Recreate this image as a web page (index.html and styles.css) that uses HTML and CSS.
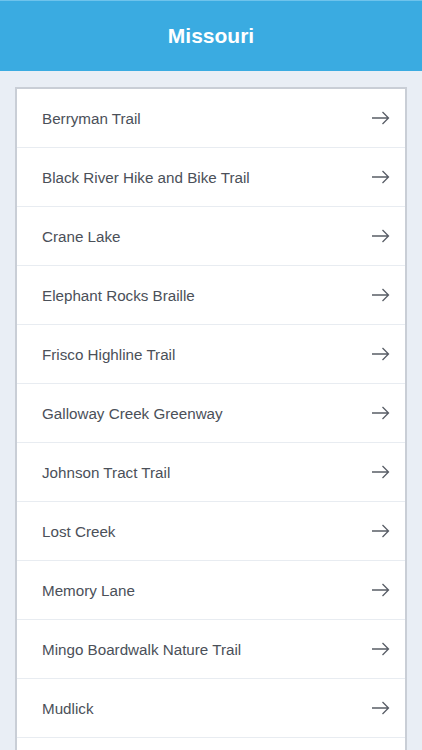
FILE: index.html
```html
<!DOCTYPE html>
<html lang="en">
<head>
    <meta charset="UTF-8">
    <meta name="viewport" content="width=device-width, initial-scale=1.0">
    <title>Missouri</title>
    <link rel="stylesheet" href="styles.css">
</head>
<body>
    <div class="header">
        <h1 class="title">Missouri</h1>
    </div>
    <div class="content">
        <ul class="trail-list">
            <li class="trail"><span>Berryman Trail</span><svg class="arrow" viewBox="0 0 18 14"><path d="M0 7H16.5M10.5 1L16.5 7L10.5 13"/></svg></li>
            <li class="trail"><span>Black River Hike and Bike Trail</span><svg class="arrow" viewBox="0 0 18 14"><path d="M0 7H16.5M10.5 1L16.5 7L10.5 13"/></svg></li>
            <li class="trail"><span>Crane Lake</span><svg class="arrow" viewBox="0 0 18 14"><path d="M0 7H16.5M10.5 1L16.5 7L10.5 13"/></svg></li>
            <li class="trail"><span>Elephant Rocks Braille</span><svg class="arrow" viewBox="0 0 18 14"><path d="M0 7H16.5M10.5 1L16.5 7L10.5 13"/></svg></li>
            <li class="trail"><span>Frisco Highline Trail</span><svg class="arrow" viewBox="0 0 18 14"><path d="M0 7H16.5M10.5 1L16.5 7L10.5 13"/></svg></li>
            <li class="trail"><span>Galloway Creek Greenway</span><svg class="arrow" viewBox="0 0 18 14"><path d="M0 7H16.5M10.5 1L16.5 7L10.5 13"/></svg></li>
            <li class="trail"><span>Johnson Tract Trail</span><svg class="arrow" viewBox="0 0 18 14"><path d="M0 7H16.5M10.5 1L16.5 7L10.5 13"/></svg></li>
            <li class="trail"><span>Lost Creek</span><svg class="arrow" viewBox="0 0 18 14"><path d="M0 7H16.5M10.5 1L16.5 7L10.5 13"/></svg></li>
            <li class="trail"><span>Memory Lane</span><svg class="arrow" viewBox="0 0 18 14"><path d="M0 7H16.5M10.5 1L16.5 7L10.5 13"/></svg></li>
            <li class="trail"><span>Mingo Boardwalk Nature Trail</span><svg class="arrow" viewBox="0 0 18 14"><path d="M0 7H16.5M10.5 1L16.5 7L10.5 13"/></svg></li>
            <li class="trail"><span>Mudlick</span><svg class="arrow" viewBox="0 0 18 14"><path d="M0 7H16.5M10.5 1L16.5 7L10.5 13"/></svg></li>
            <li class="trail trail-more"></li>
        </ul>
    </div>
</body>
</html>
```

FILE: styles.css
```css
body {
    margin: 0;
    font-family: "Liberation Sans", Arial, sans-serif;
    background-color: #e9eef5;
    height: 750px;
    overflow: hidden;
}

.header {
    height: 71px;
    background-color: #3aabe1;
    border-top: 1px solid #6ec3ec;
    box-sizing: border-box;
    display: flex;
    justify-content: center;
    align-items: center;
}

.title {
    margin: 0;
    color: white;
    font-size: 21px;
    font-weight: bold;
}

.content {
    padding: 16px 15px 0 15px;
}

.trail-list {
    list-style: none;
    margin: 0;
    padding: 0;
    background-color: white;
    border: 2px solid #c9ced6;
    border-bottom: none;
}

.trail {
    height: 58px;
    display: flex;
    justify-content: space-between;
    align-items: center;
    padding: 0 15px 0 25px;
    border-bottom: 1px solid #e8ecf1;
    color: #4b5059;
    font-size: 15.2px;
}

.trail-more {
    border-bottom: none;
}

.arrow {
    width: 18px;
    height: 14px;
    fill: none;
    stroke: #585d66;
    stroke-width: 1.3;
}
```
